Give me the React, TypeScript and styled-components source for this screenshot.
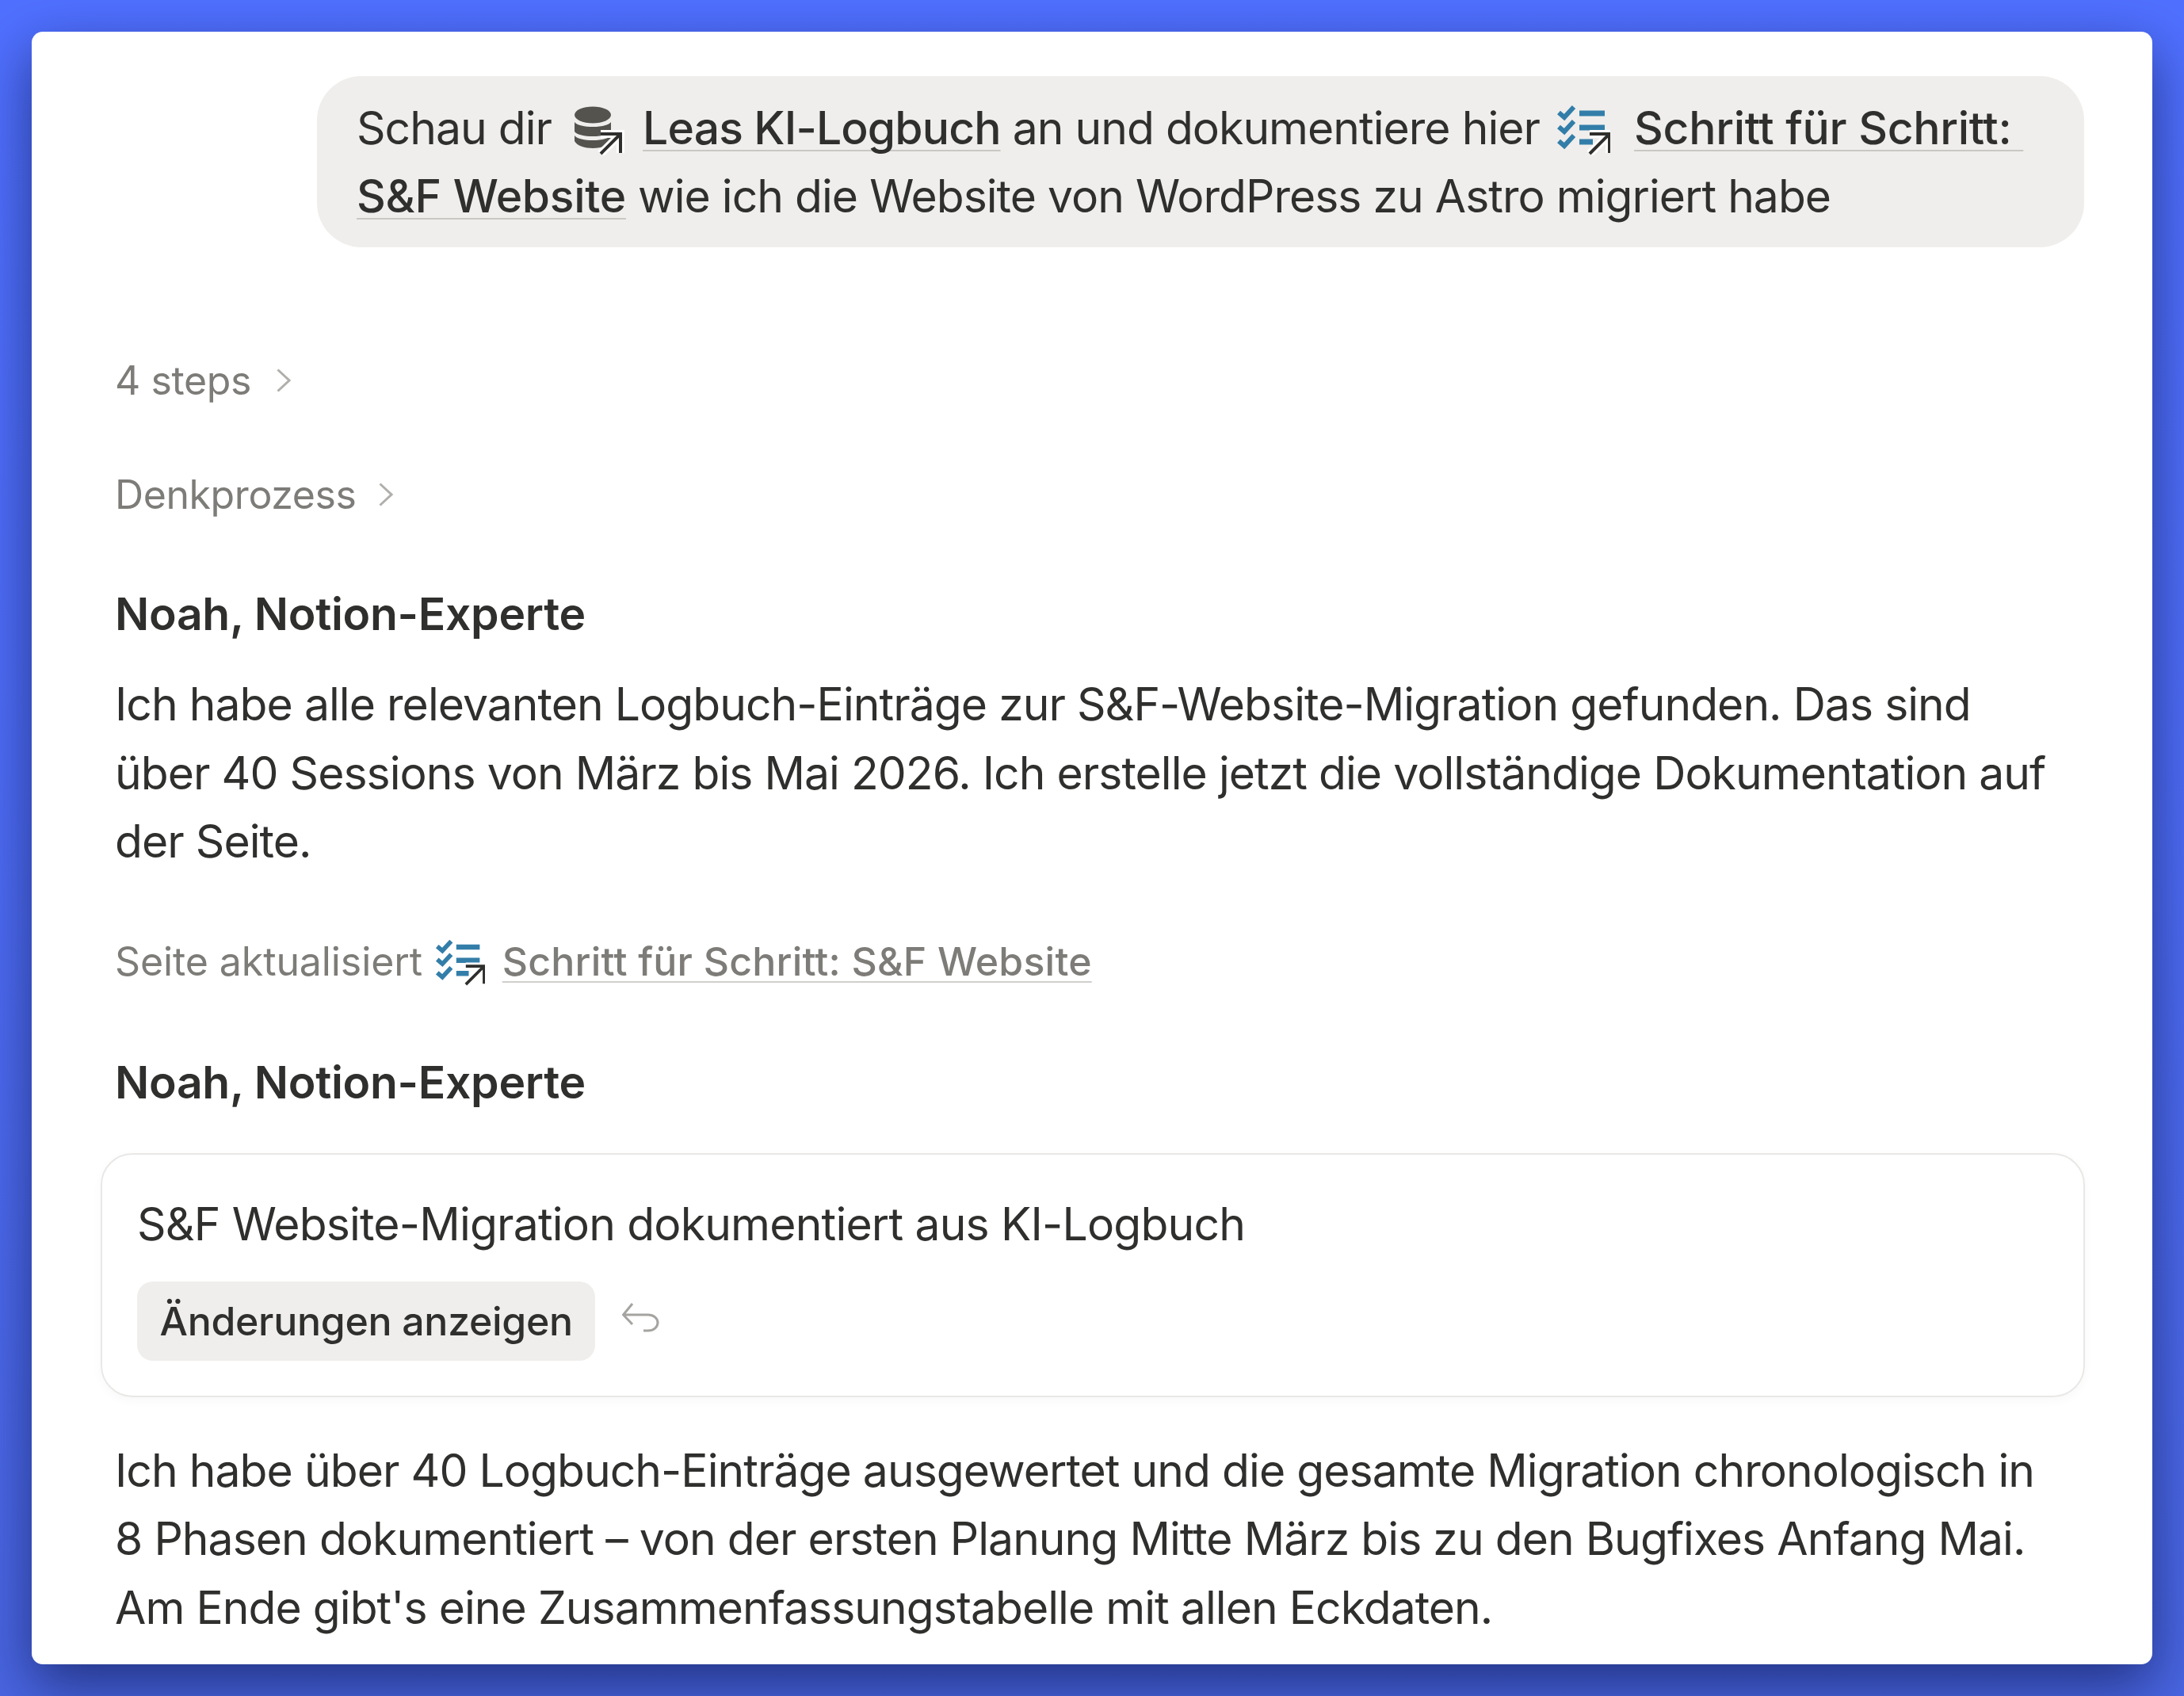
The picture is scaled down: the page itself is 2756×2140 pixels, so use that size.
import styled, { createGlobalStyle } from 'styled-components';

const LinkArrow = ({ dx = 0 }: { dx?: number }) => (
  <g transform={`translate(${dx} 0)`}>
    <path d="M37 39 H62 V63 M62 39 L37 64" fill="none" stroke="#fff" strokeWidth="10" />
    <path d="M37 39 H62 V63 M62 39 L37 64" fill="none" stroke="#2f2f2d" strokeWidth="4" />
  </g>
);

const DatabaseIcon = () => (
  <StyledPageIcon viewBox="0 0 68 66" $size={66} $before={10} $after={22} $drop={14}>
    <g fill="#55534e">
      <ellipse cx="27" cy="15" rx="23" ry="10.5" />
      <path d="M4 24 C10 32 44 32 50 24 V36 C44 44 10 44 4 36 Z" />
      <path d="M4 41 C10 49 44 49 50 41 V48 C44 60 10 60 4 48 Z" />
    </g>
    <LinkArrow />
  </StyledPageIcon>
);

const ChecklistIcon = ({ small }: { small?: boolean }) => (
  <StyledPageIcon
    viewBox="0 0 68 66"
    $size={small ? 61 : 66}
    $before={small ? 2 : 6}
    $after={small ? 22 : 30}
    $drop={small ? 13 : 14}
  >
    <g fill="none" stroke="#337ea9" strokeWidth="6">
      <path d="M3 12 L10 18 L22 5 M3 30 L10 36 L22 23 M3 48 L10 54 L22 41" />
      <path d="M29 13 H61 M29 31 H61 M29 49 H46" strokeWidth="7" />
    </g>
    <LinkArrow dx={5} />
  </StyledPageIcon>
);

const Chevron = () => (
  <StyledChevron viewBox="0 0 18 30">
    <path d="M1.5 1.5 L16 15 L1.5 28.5" fill="none" stroke="#b0afab" strokeWidth="3" />
  </StyledChevron>
);

const UndoIcon = () => (
  <StyledUndo viewBox="0 0 47 38">
    <path
      d="M13 1 L1.5 15 L13 27 M1.5 15 H33 A12 10 0 0 1 33 35 H27"
      fill="none"
      stroke="#a5a4a0"
      strokeWidth="3"
    />
  </StyledUndo>
);

const App = () => {
  return (
    <>
      <GlobalStyle />
      <StyledWindow>
        <StyledBubble>
          Schau dir <DatabaseIcon />
          <StyledPageLink $tracking={-0.85}>Leas KI-Logbuch</StyledPageLink> an und dokumentiere hier{' '}
          <ChecklistIcon />
          <StyledPageLink $tracking={-0.3}>
            Schritt für Schritt:&nbsp;
            <wbr />
            S&amp;F Website
          </StyledPageLink>{' '}
          wie ich die Website von WordPress zu Astro migriert habe
        </StyledBubble>

        <StyledToggle $top={130} $gap={32}>
          4 steps <Chevron />
        </StyledToggle>
        <StyledToggle $top={68} $gap={28}>
          Denkprozess <Chevron />
        </StyledToggle>

        <StyledAuthor $top={75}>Noah, Notion-Experte</StyledAuthor>
        <StyledParagraph $top={33}>
          Ich habe alle relevanten Logbuch-Einträge zur S&amp;F-Website-Migration gefunden. Das sind über 40 Sessions
          von März bis Mai 2026. Ich erstelle jetzt die vollständige Dokumentation auf der Seite.
        </StyledParagraph>

        <StyledUpdated>
          Seite aktualisiert <ChecklistIcon small />
          <StyledUpdatedLink $tracking={0.2}>Schritt für Schritt: S&amp;F Website</StyledUpdatedLink>
        </StyledUpdated>

        <StyledAuthor $top={77}>Noah, Notion-Experte</StyledAuthor>

        <StyledCard>
          <StyledCardTitle>S&amp;F Website-Migration dokumentiert aus KI-Logbuch</StyledCardTitle>
          <StyledCardActions>
            <StyledButton>Änderungen anzeigen</StyledButton>
            <UndoIcon />
          </StyledCardActions>
        </StyledCard>

        <StyledParagraph $top={50}>
          Ich habe über 40 Logbuch-Einträge ausgewertet und die gesamte Migration chronologisch in 8 Phasen
          dokumentiert – von der ersten Planung Mitte März bis zu den Bugfixes Anfang Mai. Am Ende gibt's eine
          Zusammenfassungstabelle mit allen Eckdaten.
        </StyledParagraph>
      </StyledWindow>
    </>
  );
};

export default App;

const GlobalStyle = createGlobalStyle`
  html, body {
    margin: 0;
    width: 2756px;
    height: 2140px;
    overflow: hidden;
  }
  body {
    background: linear-gradient(180deg, #5070ff 0%, #4f6df8 45%, #4a66e2 100%);
    font-family: Inter, "Noto Sans", sans-serif;
    color: #2f2f2d;
  }
`;

const StyledWindow = styled.main`
  box-sizing: border-box;
  width: 2676px;
  height: 2060px;
  margin: 40px 0 0 40px;
  padding: 56px 116px 0 105px;
  background: #fff;
  border-radius: 14px;
  box-shadow: 0 26px 70px rgba(10, 20, 70, 0.62);
  overflow: hidden;
`;

const StyledBubble = styled.div`
  box-sizing: border-box;
  width: 2230px;
  margin-left: 255px;
  margin-right: -30px;
  padding: 23px 50px 21px;
  background: #efeeec;
  border-radius: 56px;
  font-size: 57px;
  line-height: 86px;
  letter-spacing: -0.97px;
`;

const StyledPageIcon = styled.svg<{ $size: number; $before: number; $after: number; $drop: number }>`
  display: inline-block;
  width: ${({ $size }) => $size * (68 / 66)}px;
  height: ${({ $size }) => $size}px;
  margin: 0 ${({ $after }) => $after}px 0 ${({ $before }) => $before}px;
  vertical-align: -${({ $drop }) => $drop}px;
`;

const StyledPageLink = styled.span<{ $tracking: number }>`
  font-weight: 500;
  letter-spacing: ${({ $tracking }) => $tracking}px;
  text-decoration: underline;
  text-decoration-color: #c9c8c5;
  text-decoration-thickness: 2px;
  text-underline-offset: 7px;
  text-decoration-skip-ink: none;
`;

const StyledToggle = styled.div<{ $top: number; $gap: number }>`
  display: flex;
  align-items: center;
  gap: ${({ $gap }) => $gap}px;
  height: 76px;
  margin-top: ${({ $top }) => $top}px;
  font-size: 50px;
  letter-spacing: -0.4px;
  color: #7d7c78;
`;

const StyledChevron = styled.svg`
  width: 18px;
  height: 30px;
`;

const StyledAuthor = styled.h2<{ $top: number }>`
  margin: ${({ $top }) => $top}px 0 0;
  font-size: 57px;
  font-weight: 600;
  line-height: 76px;
  letter-spacing: -0.3px;
`;

const StyledParagraph = styled.p<{ $top: number }>`
  margin: ${({ $top }) => $top}px 0 0;
  font-size: 57px;
  line-height: 86.5px;
  letter-spacing: -0.95px;
`;

const StyledUpdated = styled.div`
  margin-top: 69px;
  font-size: 50px;
  line-height: 76px;
  letter-spacing: -0.1px;
  color: #7d7c78;
`;

const StyledUpdatedLink = styled(StyledPageLink)`
  text-decoration-color: #d0cfcc;
`;

const StyledCard = styled.section`
  box-sizing: border-box;
  height: 308px;
  margin: 51px -31px 0 -18px;
  padding: 48px 44px 0;
  border: 2px solid #e9e8e6;
  border-radius: 40px;
  box-shadow: 0 4px 14px rgba(0, 0, 0, 0.03);
`;

const StyledCardTitle = styled.div`
  font-size: 57px;
  line-height: 80px;
  letter-spacing: -0.8px;
`;

const StyledCardActions = styled.div`
  display: flex;
  align-items: center;
  gap: 34px;
  margin-top: 32px;
`;

const StyledButton = styled.div`
  display: flex;
  align-items: center;
  height: 100px;
  padding: 0 28.5px;
  background: #efeeec;
  border-radius: 20px;
  font-size: 50px;
  font-weight: 500;
  letter-spacing: -0.3px;
`;

const StyledUndo = styled.svg`
  width: 47px;
  height: 38px;
  margin-bottom: 8px;
`;
